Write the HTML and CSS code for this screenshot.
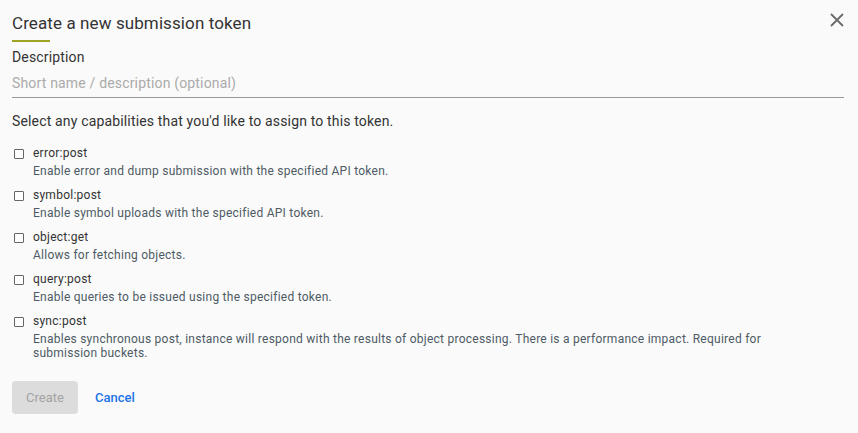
FILE: index.html
```html
<!DOCTYPE html>
<html>
<head>
<meta charset="utf-8">
<link rel="stylesheet" href="styles.css">
</head>
<body>
<div class="dialog">
  <button class="close" aria-label="Close">
    <svg width="14" height="14" viewBox="0 0 14 14"><path d="M1 1 L13 13 M13 1 L1 13" stroke="#6b6b6b" stroke-width="1.8" fill="none"/></svg>
  </button>
  <h1 class="title">Create a new submission token</h1>
  <div class="accent"></div>
  <label class="field-label">Description</label>
  <div class="input">Short name / description (optional)</div>
  <p class="intro">Select any capabilities that you'd like to assign to this token.</p>
  <ul class="caps">
    <li class="cap"><span class="box"></span><div class="cap-text"><div class="cap-name">error:post</div><div class="cap-desc">Enable error and dump submission with the specified API token.</div></div></li>
    <li class="cap"><span class="box"></span><div class="cap-text"><div class="cap-name">symbol:post</div><div class="cap-desc">Enable symbol uploads with the specified API token.</div></div></li>
    <li class="cap"><span class="box"></span><div class="cap-text"><div class="cap-name">object:get</div><div class="cap-desc">Allows for fetching objects.</div></div></li>
    <li class="cap"><span class="box"></span><div class="cap-text"><div class="cap-name">query:post</div><div class="cap-desc">Enable queries to be issued using the specified token.</div></div></li>
    <li class="cap"><span class="box"></span><div class="cap-text"><div class="cap-name">sync:post</div><div class="cap-desc">Enables synchronous post, instance will respond with the results of object processing. There is a performance impact. Required for submission buckets.</div></div></li>
  </ul>
  <div class="actions">
    <button class="btn-create" disabled>Create</button>
    <button class="btn-cancel">Cancel</button>
  </div>
</div>
</body>
</html>
```

FILE: styles.css
```css
html, body {
  margin: 0;
  padding: 0;
  background: #fafafa;
}
body {
  font-family: Roboto, "Liberation Sans", sans-serif;
  color: #333;
}
.dialog {
  position: relative;
  padding: 11px 14px 0 12px;
}
.close {
  position: absolute;
  top: 13px;
  right: 14px;
  border: 0;
  background: none;
  padding: 0;
  width: 14px;
  height: 14px;
  display: flex;
}
.title {
  margin: 0;
  font-size: 17px;
  font-weight: 400;
  line-height: 24px;
  color: #333;
  letter-spacing: 0.1px;
}
.accent {
  width: 38px;
  height: 2px;
  margin-top: 5px;
  background: #9ea423;
}
.field-label {
  display: block;
  margin-top: 5px;
  font-size: 14px;
  line-height: 20px;
  color: #333;
  letter-spacing: 0.15px;
}
.input {
  margin-top: 6px;
  font-size: 14px;
  line-height: 20px;
  color: #aaa;
  padding-bottom: 4px;
  border-bottom: 1px solid #999;
  letter-spacing: 0.17px;
}
.intro {
  margin: 13px 0 0;
  font-size: 14px;
  line-height: 20px;
  color: #333;
  letter-spacing: 0.16px;
}
.caps {
  list-style: none;
  margin: 13px 0 0;
  padding: 0;
  display: flex;
  flex-direction: column;
  gap: 8px;
}
.cap {
  display: flex;
  align-items: flex-start;
}
.box {
  flex: none;
  box-sizing: border-box;
  width: 10px;
  height: 10px;
  margin: 5px 9px 0 2px;
  border: 1px solid #666;
  border-radius: 1px;
  background: #fff;
}
.cap-text {
  max-width: 780px;
}
.cap-name {
  font-size: 12px;
  line-height: 18px;
  color: #333;
  letter-spacing: 0.25px;
}
.cap-desc {
  margin-top: 2px;
  font-size: 12px;
  line-height: 14px;
  color: #4e5a65;
  letter-spacing: 0.25px;
}
.actions {
  display: flex;
  align-items: center;
  gap: 17px;
  margin-top: 21px;
}
.btn-create {
  width: 66px;
  height: 33px;
  border: 0;
  border-radius: 4px;
  background: #dcdcdc;
  color: #a3a3a3;
  font-family: inherit;
  font-size: 13px;
  padding: 0;
}
.btn-cancel {
  border: 0;
  background: none;
  padding: 0;
  font-family: inherit;
  font-size: 13px;
  font-weight: 500;
  color: #1a73e8;
}
```
